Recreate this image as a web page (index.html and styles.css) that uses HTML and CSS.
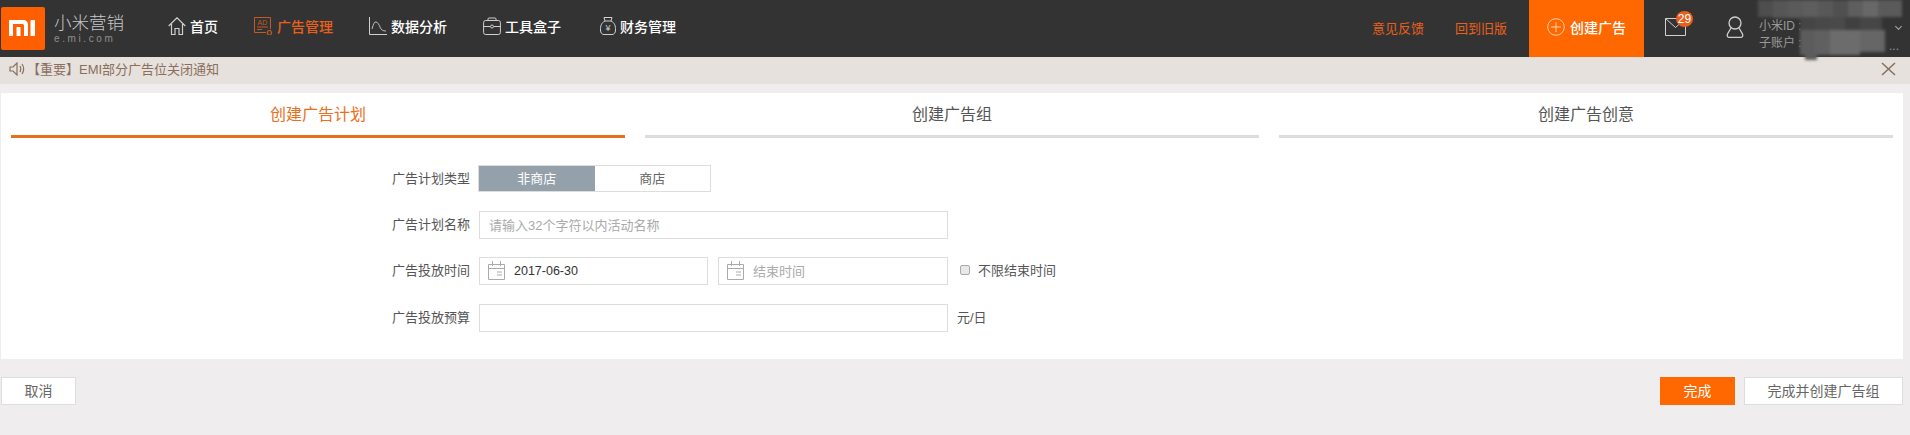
FILE: index.html
```html
<!DOCTYPE html>
<html lang="zh">
<head>
<meta charset="utf-8">
<title>创建广告计划</title>
<link rel="stylesheet" href="styles.css">
</head>
<body>
<header class="topbar">
  <div class="logo-mark">
    <svg viewBox="0 0 44 43" width="44" height="43"><path d="M8 13h14.500a4.500 4.500 0 0 1 4.500 4.500V29h-4V18.500a1.500 1.500 0 0 0-1.500-1.500H12v12H8zM15.500 20h4v9h-4zM29.500 13H34v16h-4.500z" fill="#fff"/></svg>
  </div>
  <div class="logo-text"><span class="logo-cn">小米营销</span><span class="logo-en">e.mi.com</span></div>
  <nav class="nav">
    <a class="nav-item"><svg class="ico" viewBox="0 0 18 18" width="18" height="18"><path d="M.7 9 9 .8 17.300 9M3.500 7v10.500H7v-6h4v6h3.500V7" fill="none" stroke="#d0d0d0" stroke-width="1.200"/></svg>首页</a>
    <a class="nav-item active"><svg class="ico" viewBox="0 0 19 18" width="19" height="18"><path d="M12 15.500H.5V.5h16V12M3 10h11M3 12.500h5" fill="none" stroke="#c25a24"/><text x="3.500" y="7.500" class="ico-ad">AD</text><text x="12.500" y="17.500" class="ico-q">Q</text></svg>广告管理</a>
    <a class="nav-item"><svg class="ico" viewBox="0 0 18 18" width="18" height="18"><path d="M.5 0v17.500H18" fill="none" stroke="#d0d0d0"/><path d="M3 12Q5 4 7 5c2 0 3 3 4 5 1 3 3 4 6 4" fill="none" stroke="#bdbdbd"/></svg>数据分析</a>
    <a class="nav-item"><svg class="ico" viewBox="0 0 18 18" width="18" height="18"><rect x=".6" y="3.500" width="16.800" height="14" rx="2" fill="none" stroke="#d0d0d0"/><path d="M.6 9.500H7M11 9.500h6.400M5 3.500V2q0-1 1-1h6q1 0 1 1v1.500" fill="none" stroke="#d0d0d0"/><circle cx="9" cy="9.500" r="1.500" fill="none" stroke="#d0d0d0"/></svg>工具盒子</a>
    <a class="nav-item bag"><svg class="ico" viewBox="0 0 16 18" width="16" height="18"><path d="M4 .5h8L11 4H5zM5 4C1 6 .5 9 .5 13c0 3 1.500 4.500 3.500 4.500h8c2 0 3.500-1.500 3.500-4.500 0-4-.5-7-4.500-9" fill="none" stroke="#d0d0d0"/><text x="8" y="14" class="ico-yen">¥</text></svg>财务管理</a>
  </nav>
  <div class="top-right">
    <a class="top-link">意见反馈</a>
    <a class="top-link">回到旧版</a>
    <a class="create-btn"><svg viewBox="0 0 18 18" width="18" height="18"><circle cx="9" cy="9" r="8.300" fill="none" stroke="#ffd2ad"/><path d="M9 4v10M4 9h10" stroke="#ffd2ad"/></svg>创建广告</a>
    <div class="mail">
      <svg viewBox="0 0 21 18" width="21" height="18"><path d="M.5.5h20v17H.5zM.5.5l10 9 10-9" fill="none" stroke="#d0d0d0"/></svg>
      <span class="badge">29</span>
    </div>
    <svg class="person" viewBox="0 0 18 22" width="18" height="22"><circle cx="9" cy="7" r="6" fill="none" stroke="#cfcfcf" stroke-width="1.300"/><path d="M5 12 1.500 18q-1 3 1.500 3.300h12q2.500-.3 1.500-3.300L13 12" fill="none" stroke="#cfcfcf" stroke-width="1.300"/></svg>
    <div class="account">
      <span>小米ID :</span>
      <span>子账户 :</span>
    </div>
    <span class="chevron"></span>
    <span class="more">...</span>
    <div class="blur">
      <svg viewBox="0 0 150 60" width="150" height="60">
        <rect x="1" y="0" width="15" height="17" fill="#4e4e4e"/><rect x="16" y="0" width="15" height="18" fill="#565656"/><rect x="31" y="0" width="15" height="18" fill="#5a5a5a"/><rect x="46" y="0" width="15" height="17" fill="#5e5e5e"/><rect x="61" y="0" width="15" height="17" fill="#585858"/><rect x="76" y="0" width="15" height="17" fill="#505050"/><rect x="91" y="0" width="15" height="17" fill="#5e5e5e"/><rect x="106" y="0" width="15" height="17" fill="#686868"/><rect x="121" y="0" width="24" height="17" fill="#5a5a5a"/>
        <rect x="43" y="17" width="15" height="13" fill="#454545"/><rect x="58" y="17" width="15" height="13" fill="#484848"/><rect x="73" y="17" width="15" height="13" fill="#4a4a4a"/><rect x="88" y="17" width="15" height="13" fill="#404040"/><rect x="103" y="17" width="22" height="13" fill="#464646"/>
        <rect x="43" y="30" width="15" height="25" fill="#5c5c5c"/><rect x="58" y="30" width="15" height="25" fill="#606060"/><rect x="73" y="30" width="15" height="25" fill="#6c6c6c"/><rect x="88" y="30" width="15" height="25" fill="#6c6c6c"/><rect x="103" y="30" width="25" height="22" fill="#666"/><rect x="48" y="55" width="12" height="5" fill="#5c5c5c"/>
      </svg>
    </div>
  </div>
</header>
<div class="notice">
  <svg viewBox="0 0 16 14" width="16" height="14"><path d="M1 5h3l4-4v12L4 9H1zM11 4c1 2 1 4 0 6M13 2c2 3 2 7 0 10" fill="none" stroke="#8a6f5e" stroke-width="1.200"/></svg>
  <span class="notice-text">【重要】EMI部分广告位关闭通知</span>
  <svg class="notice-close" viewBox="0 0 15 14" width="15" height="14"><path d="M1 1l13 12M14 1 1 13" stroke="#85705f" stroke-width="1.500"/></svg>
</div>
<main class="panel">
  <div class="steps">
    <div class="step current">创建广告计划</div>
    <div class="step">创建广告组</div>
    <div class="step">创建广告创意</div>
  </div>
  <form class="form">
    <div class="row">
      <label class="label">广告计划类型</label>
      <div class="segment"><span class="seg on">非商店</span><span class="seg">商店</span></div>
    </div>
    <div class="row">
      <label class="label">广告计划名称</label>
      <div class="field wide placeholder">请输入32个字符以内活动名称</div>
    </div>
    <div class="row">
      <label class="label">广告投放时间</label>
      <div class="dates">
        <div class="field date"><svg class="cal" viewBox="0 0 17 19" width="17" height="19"><path d="M.5 3.500h16v15H.5zM.5 7.500h16M4.500 0v5M12.500 0v5M9 11h5M9 14h5" fill="none" stroke="#aaa"/></svg><span class="value">2017-06-30</span></div>
        <div class="field date end placeholder"><svg class="cal" viewBox="0 0 17 19" width="17" height="19"><path d="M.5 3.500h16v15H.5zM.5 7.500h16M4.500 0v5M12.500 0v5M9 11h5M9 14h5" fill="none" stroke="#aaa"/></svg>结束时间</div>
      </div>
      <span class="check"><span class="box"></span>不限结束时间</span>
    </div>
    <div class="row last">
      <label class="label">广告投放预算</label>
      <div class="field wide"></div>
      <span class="unit">元/日</span>
    </div>
  </form>
</main>
<footer class="actions">
  <a class="btn">取消</a>
  <div class="actions-right">
    <a class="btn primary">完成</a>
    <a class="btn long">完成并创建广告组</a>
  </div>
</footer>
</body>
</html>
```
FILE: styles.css
```css
* { box-sizing: border-box; }
html, body { margin: 0; padding: 0; }
body {
  width: 1910px;
  height: 435px;
  overflow: hidden;
  background: #efedee;
  font-family: "Liberation Sans", "Noto Sans CJK SC", sans-serif;
  font-size: 13px;
  color: #555;
}
.topbar {
  height: 57px;
  background: #333;
  display: flex;
  align-items: center;
  padding-left: 1px;
}
.logo-mark {
  width: 44px;
  height: 43px;
  background: #ff5f00;
  border-radius: 2px;
  display: flex;
}
.logo-text { display: flex; flex-direction: column; margin: 0 0 -1px 9px; width: 114px; }
.logo-cn { font-size: 17.500px; line-height: 20px; color: #c8c8c8; font-weight: 300; }
.logo-en { font-size: 10px; line-height: 12px; letter-spacing: 2.600px; color: #8f8f8f; }
.nav { display: flex; align-items: center; padding-bottom: 5px; }
.nav-item {
  display: flex;
  align-items: center;
  gap: 4px;
  font-size: 14px;
  color: #fff;
  font-weight: 500;
}
.nav-item:nth-child(1) { width: 86px; }
.nav-item:nth-child(2) { width: 115px; }
.nav-item:nth-child(3) { width: 114px; }
.nav-item:nth-child(4) { width: 116px; }
.nav-item.active { color: #e8601c; }
.bag { padding-left: 1px; }
.ico { flex: none; }
.ico-ad { font-size: 7px; fill: #c25a24; }
.ico-q { font-size: 7px; fill: #d8641f; font-weight: 700; }
.ico-yen { font-size: 9px; fill: #d0d0d0; text-anchor: middle; }
.top-right {
  margin-left: auto;
  height: 57px;
  display: flex;
  align-items: center;
  position: relative;
  width: 538px;
}
.top-link { color: #e8601c; font-size: 13px; margin: 0 31px 3px 0; }
.create-btn {
  width: 115px;
  height: 57px;
  background: #ff6700;
  color: #fff;
  font-size: 14px;
  display: flex;
  align-items: center;
  justify-content: center;
  gap: 5px;
  font-weight: 500;
  margin-left: -9px;
  padding-bottom: 3px;
}
.mail { position: relative; margin: 0 0 3px 21px; display: flex; }
.badge {
  position: absolute;
  left: 11px;
  top: -7px;
  width: 17px;
  height: 16px;
  border-radius: 50%;
  background: #e8601c;
  color: #fff;
  font-size: 12px;
  line-height: 16px;
  text-align: center;
}
.person { margin: 0 0 3px 40px; }
.account {
  margin: 12px 0 0 15px;
  display: flex;
  flex-direction: column;
  color: #999;
  font-size: 12px;
  line-height: 17px;
}
.chevron {
  position: absolute;
  right: 9px;
  top: 24px;
  width: 5px;
  height: 5px;
  border-right: 1px solid #aaa;
  border-bottom: 1px solid #aaa;
  transform: rotate(45deg);
}
.more { position: absolute; right: 11px; top: 39px; color: #999; font-size: 12px; }
.blur { position: absolute; left: 385px; top: 0; display: flex; filter: blur(1.500px); }
.notice {
  height: 27px;
  background: #e6e1dc;
  display: flex;
  align-items: center;
  padding: 0 14px 3px 9px;
  color: #8a6f5e;
  font-size: 13px;
}
.notice-text { margin: 0 0 1px 2px; }
.notice-close { margin-left: auto; }
.panel {
  margin: 9px 7px 0 1px;
  height: 266px;
  background: #fff;
}
.steps { display: flex; gap: 20px; padding: 0 10px; }
.step {
  flex: 1;
  height: 45px;
  padding-top: 11px;
  border-bottom: 3px solid #ddd;
  text-align: center;
  font-size: 16px;
  line-height: 22px;
  color: #555;
}
.step.current { color: #e8701c; border-bottom-color: #e8701c; }
.form {
  display: flex;
  flex-direction: column;
  gap: 18px;
  padding: 27px 0 0 391px;
}
.row { display: flex; align-items: center; height: 28px; }
.row.last { margin-top: 1px; }
.label { width: 86px; color: #555; font-size: 13px; flex: none; padding-bottom: 3px; }
.segment {
  display: flex;
  width: 233px;
  height: 27px;
  border: 1px solid #ddd;
  align-self: flex-start;
}
.seg { flex: 1; text-align: center; line-height: 25px; font-size: 13px; color: #666; }
.seg.on { background: #94a1aa; color: #fff; }
.field {
  height: 28px;
  border: 1px solid #ddd;
  background: #fff;
  display: flex;
  align-items: center;
  font-size: 13px;
}
.wide { width: 469px; flex: none; padding: 0 0 2px 9px; margin-left: 1px; }
.placeholder { color: #aaa; }
.dates { display: flex; gap: 10px; margin-left: 1px; }
.date { width: 229px; padding: 0 0 1px 8px; }
.date.end { width: 230px; }
.cal { margin-right: 9px; flex: none; }
.value { color: #333; font-size: 12.500px; }
.check { display: flex; align-items: center; margin-left: 12px; padding-bottom: 3px; color: #555; }
.box {
  width: 10px;
  height: 10px;
  border: 1px solid #aaa;
  border-radius: 2px;
  background: #e8e8e8;
  margin-right: 8px;
}
.unit { margin-left: 9px; padding-bottom: 3px; color: #555; }
.actions {
  display: flex;
  justify-content: space-between;
  padding: 18px 7px 0 1px;
}
.actions-right { display: flex; gap: 9px; }
.btn {
  width: 75px;
  height: 28px;
  border: 1px solid #ddd;
  background: #fff;
  color: #666;
  font-size: 14px;
  line-height: 27px;
  text-align: center;
}
.btn.primary { background: #ff6700; border-color: #ff6700; color: #fff; }
.btn.long { width: 159px; }
```
